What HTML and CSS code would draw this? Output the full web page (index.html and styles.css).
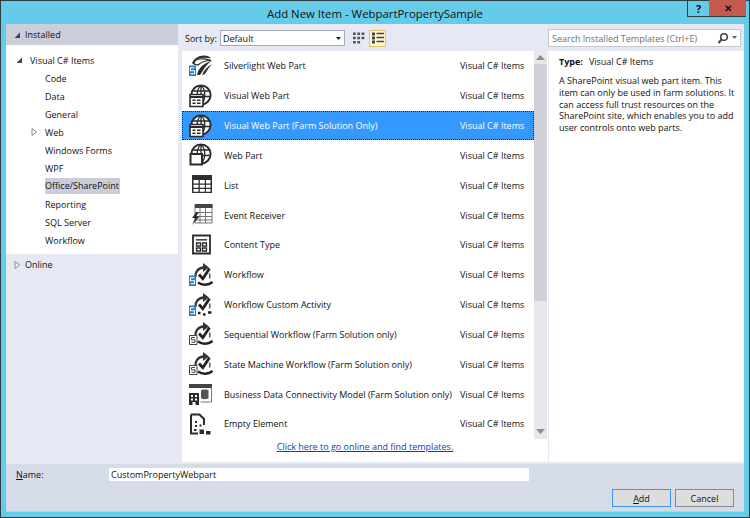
FILE: index.html
```html
<!DOCTYPE html>
<html lang="en">
<head>
<meta charset="utf-8">
<title>Add New Item - WebpartPropertySample</title>
<link rel="stylesheet" href="styles.css">
</head>
<body>
<svg class="defs" width="0" height="0" aria-hidden="true">
  <symbol id="i-globe" viewBox="0 0 24 24">
    <circle cx="12" cy="11" r="9.6" fill="var(--halo,none)" stroke="#2b2b2b" stroke-width="1.9"/>
    <path d="M12 1.500v19M3 7h18M2.500 12.500h19M12 1.500c-5 4-5 14 0 19M12 1.500c5 4 5 14 0 19" fill="none" stroke="#2b2b2b" stroke-width="1.300"/>
  </symbol>
  <symbol id="i-vweb" viewBox="0 0 24 24">
    <use href="#i-globe"/>
    <path d="M1 10.500h13v12H1z" fill="#fff" stroke="#2b2b2b" stroke-width="1.600"/>
    <path d="M1 13h13" stroke="#2b2b2b" stroke-width="2"/>
    <path d="M3.500 15.500h3v1.600h-3zM8 15.500h3.500v1.600H8zM3.500 18.500h3v1.600h-3zM8 18.500h3.500v1.600H8z" fill="#2b2b2b"/>
  </symbol>
  <symbol id="i-web" viewBox="0 0 24 24">
    <use href="#i-globe"/>
    <path d="M1.500 11h11.500v10.500H1.500z" fill="#fff" stroke="#2b2b2b" stroke-width="2"/>
  </symbol>
  <symbol id="i-silver" viewBox="0 0 24 24">
    <path d="M3 9c2-4.500 7-8 13-7.500 3 .3 5 1.500 6 3-5-1.500-11-1-15 1.500-1 1-1.500 2-1.500 4H4z" fill="#2b2b2b"/>
    <path d="M5 10c0-3 2-4.500 6-5 4-.5 8 0 11 1.500-6 0-10 1.500-13 4.500z" fill="#fff" stroke="#2b2b2b" stroke-width="1.200"/>
    <path d="M8 21c1-6 5-11 15-14.500-4 3-7 6-9 10l-3 4.500z" fill="#2b2b2b"/>
    <path d="M13 21c2-5 5-8 10-11-3 3-5 7-7 10z" fill="#333"/>
    <path d="M0 11.500h7V22H0z" fill="#1f7fc4"/>
    <path d="M5.500 13.800h-4v3h4v3h-4" fill="none" stroke="#fff" stroke-width="1.100"/>
  </symbol>
  <symbol id="i-list" viewBox="0 0 24 24">
    <path d="M3 2h20v18H3z" fill="#2f2f2f"/>
    <path d="M4.500 7h5v3.500h-5zM10.800 7h5v3.500h-5zM17 7h4.500v3.500H17zM4.500 11.800h5v3h-5zM10.800 11.800h5v3h-5zM17 11.800h4.500v3H17zM4.500 16h5v2.700h-5zM10.800 16h5v2.700h-5zM17 16h4.500v2.700H17z" fill="#fff"/>
  </symbol>
  <symbol id="i-event" viewBox="0 0 24 24">
    <path d="M6 1.500h17v18.500H6z" fill="#fff" stroke="#777" stroke-width="1"/>
    <path d="M6 1h17.500v4H6z" fill="#444"/>
    <path d="M6 9.500h17M6 13.500h17M6 17h17M11 5v15M16.500 5v15" stroke="#777" stroke-width="1"/>
    <path d="M7.500 9 3 15h3.500L3 22l7.500-8.500H7L10 9z" fill="#222"/>
  </symbol>
  <symbol id="i-ctype" viewBox="0 0 24 24">
    <path d="M4 2.500h17v18H4z" fill="none" stroke="#2b2b2b" stroke-width="1.800"/>
    <path d="M7 6h11v1.600H7z" fill="#444"/>
    <path d="M7.500 10h4v3h-4zM13.500 10h4v3h-4zM7.500 15h4v3h-4zM13.500 15h4v3h-4z" fill="none" stroke="#2b2b2b" stroke-width="1.300"/>
  </symbol>
  <symbol id="i-flowbase" viewBox="0 0 24 24">
    <path d="M6.500 14c-.5-5 2.500-9 8.500-9.500" fill="none" stroke="#333" stroke-width="2.300"/>
    <path d="M14 0 20 4.500 14 9z" fill="#333"/>
    <path d="M10 11.500 13.800 15.800 20.500 5.500" fill="none" stroke="#222" stroke-width="2.800"/>
    <path d="M20.500 10.500c.6 1.800.5 3.500 0 5" fill="none" stroke="#555" stroke-width="1.500"/>
  </symbol>
  <symbol id="i-flow" viewBox="0 0 24 24">
    <use href="#i-flowbase"/>
    <path d="M9 19.500c4 3 10.500 3 14.500-.5" fill="none" stroke="#222" stroke-width="2.400"/>
    <path d="M0 12.500h7V23H0z" fill="#1f7fc4"/>
    <path d="M5.500 14.800h-4v3h4v3h-4" fill="none" stroke="#fff" stroke-width="1.100"/>
  </symbol>
  <symbol id="i-cflow" viewBox="0 0 24 24">
    <use href="#i-flowbase"/>
    <path d="M9 20h2.500M14 21.500h2.500M19 19.500h3.500" fill="none" stroke="#222" stroke-width="2.400"/>
    <path d="M0 12.500h7V23H0z" fill="#1f7fc4"/>
    <path d="M5.500 14.800h-4v3h4v3h-4" fill="none" stroke="#fff" stroke-width="1.100"/>
  </symbol>
  <symbol id="i-sflow" viewBox="0 0 24 24">
    <use href="#i-flowbase"/>
    <path d="M9 19.500c4 3 10.500 3 14.500-.5" fill="none" stroke="#222" stroke-width="2.400"/>
    <path d="M.5 13.500h7.500v9H.5z" fill="#fff" stroke="#444"/>
    <path d="M6 15.500H2.500v2.300H6v2.500H2.500" fill="none" stroke="#444"/>
  </symbol>
  <symbol id="i-bdc" viewBox="0 0 24 24">
    <path d="M0 2h23v4H0z" fill="#444"/>
    <path d="M22.500 5v15h-11" fill="none" stroke="#777"/>
    <path d="M12 8.500c0-1.500 7.500-1.500 7.500 0V16c0 1.500-7.500 1.500-7.500 0z" fill="#555"/>
    <path d="M0 11h10v12H0z" fill="#2b2b2b"/>
    <path d="M2 13h2v2H2zM6 13h2v2H6zM2 16.500h2v2H2zM6 16.500h2v2H6zM3.500 20h3v3h-3z" fill="#fff"/>
  </symbol>
  <symbol id="i-empty" viewBox="0 0 24 24">
    <path d="M2 2.500h8.500L15 7v6M9 21.500H2v-19" fill="none" stroke="#2b2b2b" stroke-width="2"/>
    <path d="M6 9h2v2H6zM6 13h2v2H6zM10.500 12.500h2v2h-2zM5 17h2.500v2H5z" fill="#2b2b2b"/>
    <path d="M10.500 17.500H15V22h-4.500zM17 19h4.500v3.500H17z" fill="#2b2b2b"/>
  </symbol>
</svg>

<div class="window">
  <header class="titlebar">
    <h1 class="title">Add New Item - WebpartPropertySample</h1>
    <div class="winbtns">
      <span class="winbtn help">?</span>
      <span class="winbtn close">✕</span>
    </div>
  </header>

  <div class="body">
    <div class="main">
      <aside class="left">
        <div class="group-head"><svg class="tw" viewBox="0 0 8 8"><path d="M7 1.500V7H1.500z" fill="#444"/></svg>Installed</div>
        <ul class="tree">
          <li class="node lvl1"><svg class="tw" viewBox="0 0 8 8"><path d="M7 1.500V7H1.500z" fill="#444"/></svg>Visual C# Items</li>
          <li class="node lvl2">Code</li>
          <li class="node lvl2">Data</li>
          <li class="node lvl2">General</li>
          <li class="node lvl2"><svg class="tw tw-web" viewBox="0 0 8 8"><path d="M2 .5 6.500 4 2 7.500z" fill="#fff" stroke="#888"/></svg>Web</li>
          <li class="node lvl2">Windows Forms</li>
          <li class="node lvl2">WPF</li>
          <li class="node lvl2"><span class="picked">Office/SharePoint</span></li>
          <li class="node lvl2">Reporting</li>
          <li class="node lvl2">SQL Server</li>
          <li class="node lvl2">Workflow</li>
        </ul>
        <div class="online"><svg class="tw" viewBox="0 0 8 8"><path d="M2 .5 6.500 4 2 7.500z" fill="#fff" stroke="#888"/></svg>Online</div>
      </aside>

      <section class="center">
        <div class="toolbar">
          <span class="sort-label">Sort by:</span>
          <div class="select">Default<svg class="caret" viewBox="0 0 7 4"><path d="M0 0h7L3.500 4z" fill="#222"/></svg></div>
          <svg class="view" viewBox="0 0 12 12"><path d="M0 .5h2.800v2.500H0zM4.300 .5h2.800v2.500H4.300zM8.600 .5h2.800v2.500H8.600zM0 4.800h2.800v2.500H0zM4.300 4.800h2.800v2.500H4.300zM8.600 4.800h2.800v2.500H8.600zM0 9h2.800v2.500H0zM4.300 9h2.800v2.500H4.300z" fill="#555"/></svg>
          <span class="view-on"><svg class="view-list" viewBox="0 0 12 12"><path d="M0 .5h3v3H0zM0 4.500h3v3H0zM0 8.500h3v3H0z" fill="#444"/><path d="M4.500 1.500H12M4.500 5.500H12M4.500 9.500H12" stroke="#444" stroke-width="1.300"/></svg></span>
        </div>
        <div class="listwrap">
          <div class="listcol">
            <div class="rows">
              <div class="row"><svg class="ico"><use href="#i-silver"/></svg><span class="name">Silverlight Web Part</span><span class="kind">Visual C# Items</span></div>
              <div class="row"><svg class="ico"><use href="#i-vweb"/></svg><span class="name">Visual Web Part</span><span class="kind">Visual C# Items</span></div>
              <div class="row sel"><svg class="ico"><use href="#i-vweb"/></svg><span class="name">Visual Web Part (Farm Solution Only)</span><span class="kind">Visual C# Items</span></div>
              <div class="row"><svg class="ico"><use href="#i-web"/></svg><span class="name">Web Part</span><span class="kind">Visual C# Items</span></div>
              <div class="row"><svg class="ico"><use href="#i-list"/></svg><span class="name">List</span><span class="kind">Visual C# Items</span></div>
              <div class="row"><svg class="ico"><use href="#i-event"/></svg><span class="name">Event Receiver</span><span class="kind">Visual C# Items</span></div>
              <div class="row"><svg class="ico"><use href="#i-ctype"/></svg><span class="name">Content Type</span><span class="kind">Visual C# Items</span></div>
              <div class="row"><svg class="ico"><use href="#i-flow"/></svg><span class="name">Workflow</span><span class="kind">Visual C# Items</span></div>
              <div class="row"><svg class="ico"><use href="#i-cflow"/></svg><span class="name">Workflow Custom Activity</span><span class="kind">Visual C# Items</span></div>
              <div class="row"><svg class="ico"><use href="#i-sflow"/></svg><span class="name">Sequential Workflow (Farm Solution only)</span><span class="kind">Visual C# Items</span></div>
              <div class="row"><svg class="ico"><use href="#i-sflow"/></svg><span class="name">State Machine Workflow (Farm Solution only)</span><span class="kind">Visual C# Items</span></div>
              <div class="row"><svg class="ico"><use href="#i-bdc"/></svg><span class="name">Business Data Connectivity Model (Farm Solution only)</span><span class="kind">Visual C# Items</span></div>
              <div class="row"><svg class="ico"><use href="#i-empty"/></svg><span class="name">Empty Element</span><span class="kind">Visual C# Items</span></div>
            </div>
            <div class="scrollbar">
              <svg class="sb-arrow" viewBox="0 0 9 5"><path d="M4.500 0 9 5H0z" fill="#8a8d94"/></svg>
              <div class="thumb"></div>
              <svg class="sb-arrow sb-down" viewBox="0 0 9 5"><path d="M0 0h9L4.500 5z" fill="#8a8d94"/></svg>
            </div>
          </div>
          <div class="online-link"><a href="#">Click here to go online and find templates.</a></div>
        </div>
      </section>

      <aside class="right">
        <div class="search"><span class="search-text">Search Installed Templates (Ctrl+E)</span><svg class="search-ico" viewBox="0 0 20 12"><circle cx="7" cy="5" r="3.300" fill="none" stroke="#444" stroke-width="1.500"/><path d="M4.500 7.500 1.500 11" stroke="#444" stroke-width="2"/><path d="M15 4h5l-2.500 3z" fill="#666"/></svg></div>
        <div class="details">
          <p class="type"><b>Type:</b><span>Visual C# Items</span></p>
          <p class="desc">A SharePoint visual web part item. This item can only be used in farm solutions. It can access full trust resources on the SharePoint site, which enables you to add user controls onto web parts.</p>
        </div>
      </aside>
    </div>

    <footer class="bottom">
      <div class="name-row">
        <label class="name-label"><u>N</u>ame:</label>
        <div class="name-input">CustomPropertyWebpart</div>
      </div>
      <div class="btn-row">
        <button class="btn primary"><u>A</u>dd</button>
        <button class="btn">Cancel</button>
      </div>
    </footer>
  </div>
</div>
</body>
</html>
```

FILE: styles.css
```css
* { box-sizing: border-box; }
html, body { margin: 0; padding: 0; }
body {
  width: 750px;
  height: 518px;
  overflow: hidden;
  font-family: "Open Sans", "Liberation Sans", sans-serif;
  font-size: 9px;
  color: #111;
}
.defs { position: absolute; }
.window {
  width: 750px;
  height: 518px;
  display: flex;
  flex-direction: column;
  background: #64cbe9;
  border: 1px solid #2e3d44;
  position: relative;
}
.titlebar {
  height: 23px;
  flex: none;
  display: flex;
  align-items: center;
  justify-content: center;
}
.title {
  margin: 0;
  font-weight: 400;
  font-size: 11.4px;
  color: #111;
  padding-top: 1px;
}
.winbtns {
  position: absolute;
  top: -1px;
  left: 686px;
  display: flex;
}
.winbtn {
  height: 17px;
  display: flex;
  align-items: center;
  justify-content: center;
  font-weight: 700;
  border: 1px solid #2e3d44;
  border-top: 0;
}
.help { width: 22px; font-size: 11px; border-right: 0; }
.close { width: 37px; background: #c75a50; font-size: 10px; color: #111; border: 0; border-bottom: 1px solid #2e3d44; }

.body {
  margin: 0 5px 5px;
  flex: 1;
  min-height: 0;
  display: flex;
  flex-direction: column;
  background: #e6e9f4;
}
.main { flex: 1; min-height: 0; display: flex; }

.left { width: 172px; flex: none; display: flex; flex-direction: column; }
.tw { width: 8px; height: 8px; flex: none; }
.group-head {
  height: 21px;
  background: #cbcdda;
  display: flex;
  align-items: center;
  gap: 4px;
  padding-left: 7px;
}
.tree {
  list-style: none;
  margin: 0;
  padding: 6px 0 5px;
  background: #fff;
  height: 209px;
}
.node { height: 18px; display: flex; align-items: center; }
.lvl1 { padding-left: 9px; gap: 7px; }
.lvl2 { padding-left: 39px; position: relative; }
.tw-web { position: absolute; left: 24px; top: 5px; }
.picked { background: #cbcdda; padding: 1px 1px 2px 0; }
.online {
  display: flex;
  align-items: center;
  gap: 4px;
  padding: 0 0 0 7px;
  height: 21px;
}

.center { width: 370px; flex: none; display: flex; flex-direction: column; }
.toolbar {
  height: 27px;
  flex: none;
  display: flex;
  align-items: center;
  padding: 1px 0 0 7px;
}
.sort-label { width: 35px; flex: none; white-space: nowrap; }
.select {
  width: 125px;
  height: 16px;
  background: #fff;
  border: 1px solid #a8acb6;
  padding-left: 2px;
  display: flex;
  align-items: center;
  justify-content: space-between;
  padding-right: 3px;
}
.caret { width: 5px; height: 3px; }
.view { width: 12px; height: 12px; margin-left: 8px; }
.view-on {
  width: 17px;
  height: 17px;
  margin-left: 4px;
  background: #fff7cf;
  border: 1px solid #e5c365;
  display: flex;
  align-items: center;
  justify-content: center;
}
.view-list { width: 12px; height: 12px; }

.listwrap { flex: 1; min-height: 0; background: #fff; margin-left: 4px; display: flex; flex-direction: column; }
.listcol { display: flex; }
.rows { width: 352px; flex: none; }
.row {
  height: 29.84px;
  display: flex;
  align-items: center;
  padding-left: 7px;
}
.ico { width: 24px; height: 24px; flex: none; margin-right: 11px; }
.name { width: 236px; flex: none; white-space: nowrap; }
.kind { white-space: nowrap; }
.sel {
  background: #3399ff;
  color: #fff;
  outline: 1px dotted #0c2a52;
  outline-offset: -1px;
  --halo: #fff;
}
.scrollbar {
  width: 13px;
  flex: none;
  background: #e8e8ec;
  display: flex;
  flex-direction: column;
  align-items: center;
}
.sb-arrow { width: 9px; height: 5px; margin: 4px 0 4px; flex: none; }
.thumb { width: 100%; height: 237px; background: #d0d1d7; }
.sb-down { margin-top: auto; margin-bottom: 5px; }
.online-link { text-align: center; padding-top: 1px; }
.online-link a { color: #0e3bc7; }

.right { flex: 1; min-width: 0; display: flex; flex-direction: column; }
.search {
  height: 18px;
  margin: 5px 3px 4px 0;
  background: #fff;
  border: 1px solid #c5c8d0;
  display: flex;
  align-items: center;
  justify-content: space-between;
  padding: 0 3px 0 3px;
  color: #6f6f6f;
}
.search-ico { width: 20px; height: 12px; }
.details { flex: 1; background: #fff; padding: 4px 8px 0 10px; margin-left: 1px; }
.type { margin: 0 0 7px; }
.type b { font-weight: 700; margin-right: 6px; }
.desc { margin: 0; line-height: 11.8px; }

.bottom {
  height: 48px;
  flex: none;
  margin-top: 2px;
  background: #d6dbe8;
  border-bottom: 1px solid #c5cad6;
  display: flex;
  flex-direction: column;
  padding: 4px 10px 0;
}
.name-row { display: flex; align-items: center; }
.name-label { width: 93px; }
.name-input {
  width: 420px;
  height: 13px;
  background: #fff;
  padding-left: 2px;
  display: flex;
  align-items: center;
}
.btn-row { display: flex; justify-content: flex-end; gap: 4px; margin-top: 8px; }
.btn {
  width: 59px;
  height: 18px;
  padding: 0;
  font: inherit;
  color: #111;
  background: #dddddd;
  border: 1px solid #8a8a8a;
}
.primary { border-color: #3399ff; }
```
